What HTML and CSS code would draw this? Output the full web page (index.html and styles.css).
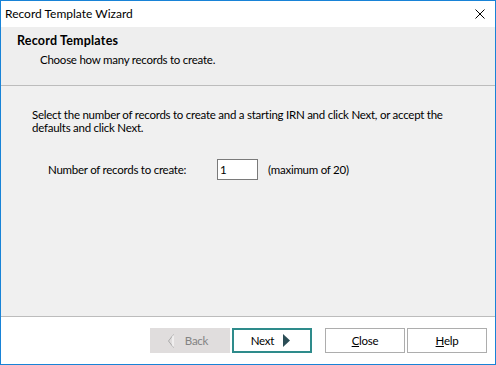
FILE: index.html
```html
<!DOCTYPE html>
<html>
<head>
<meta charset="utf-8">
<link rel="stylesheet" href="styles.css">
</head>
<body>
<div class="window">
  <div class="titlebar">
    <span class="title">Record Template Wizard</span>
    <svg class="close-x" width="10" height="10" viewBox="0 0 10 10"><path d="M0.5 0.5 L9.5 9.5 M9.5 0.5 L0.5 9.5" stroke="#000" stroke-width="1" fill="none"/></svg>
  </div>
  <div class="header">
    <div class="h-title">Record Templates</div>
    <div class="h-sub">Choose how many records to create.</div>
  </div>
  <div class="content">
    <p class="intro">Select the number of records to create and a starting IRN and click Next, or accept the defaults and click Next.</p>
    <div class="row">
      <span class="label">Number of records to create:</span>
      <div class="input">1</div>
      <span class="hint">(maximum of 20)</span>
    </div>
  </div>
  <div class="footer">
    <div class="btn disabled">
      <svg width="6" height="14" viewBox="0 0 6 14"><path d="M5.5 0.5 L0.5 7 L5.5 13.5" stroke="#a9a9a9" fill="none"/><path d="M5 1.5 L5 12.5" stroke="#ffffff" stroke-width="1"/></svg>
      <span>Back</span>
    </div>
    <div class="btn primary">
      <span>Next</span>
      <svg width="7" height="13" viewBox="0 0 7 13"><path d="M0 0 L7 6.5 L0 13 Z" fill="#2b4d56"/></svg>
    </div>
    <div class="btn spaced"><span><u>C</u>lose</span></div>
    <div class="btn"><span><u>H</u>elp</span></div>
  </div>
</div>
</body>
</html>
```
FILE: styles.css
```css
html, body {
  margin: 0;
  padding: 0;
  background: #ffffff;
}
body {
  font-family: Lato, "Liberation Sans", sans-serif;
  font-size: 11.5px;
  letter-spacing: -0.25px;
  color: #000;
}
.window {
  width: 496px;
  height: 365px;
  box-sizing: border-box;
  border: 1px solid #1883d7;
  display: flex;
  flex-direction: column;
}
.titlebar {
  height: 26px;
  flex: none;
  background: #fff;
  display: flex;
  align-items: center;
  justify-content: space-between;
  padding: 0 10px 0 4px;
}
.title {
  font-size: 12px;
  letter-spacing: 0;
  margin-top: -2px;
}
.close-x {
  margin-top: -1px;
}
.header {
  height: 59px;
  flex: none;
  box-sizing: border-box;
  background: #eeeeee;
  border-bottom: 1px solid #bcbcbc;
  padding: 6px 0 0 16px;
}
.h-title {
  font-weight: bold;
  font-size: 12.5px;
  letter-spacing: 0.2px;
  line-height: 16px;
}
.h-sub {
  line-height: 16px;
  margin-top: 3px;
  padding-left: 23px;
}
.content {
  flex: 1;
  background: #f0f0f0;
  border-bottom: 1px solid #bcbcbc;
  padding: 0 0 0 31px;
}
.intro {
  width: 435px;
  margin: 22px 0 0 0;
  line-height: 13px;
}
.row {
  display: flex;
  align-items: center;
  margin-top: 25px;
  padding-left: 16px;
}
.label {
  width: 169px;
}
.input {
  width: 37px;
  height: 19px;
  border: 1px solid #7a7a7a;
  background: #fff;
  padding-left: 2px;
  line-height: 19px;
}
.hint {
  margin-left: 10px;
}
.footer {
  height: 47px;
  flex: none;
  box-sizing: border-box;
  background: #fff;
  display: flex;
  align-items: flex-start;
  padding: 11px 0 0 149px;
}
.btn {
  width: 80px;
  height: 25px;
  box-sizing: border-box;
  border: 1px solid #adadad;
  background: #fff;
  display: flex;
  align-items: center;
  justify-content: center;
  gap: 7px;
  margin-left: 2px;
}
.btn:first-child {
  margin-left: 0;
}
.btn.disabled {
  background: #e0dddd;
  border-color: #e0dddd;
  color: #838383;
  gap: 11px;
  padding-right: 4px;
}
.btn.primary {
  border: 2px solid #2e8b8b;
  gap: 9px;
  padding-right: 3px;
}
.btn.spaced {
  margin-left: 13px;
}
```
